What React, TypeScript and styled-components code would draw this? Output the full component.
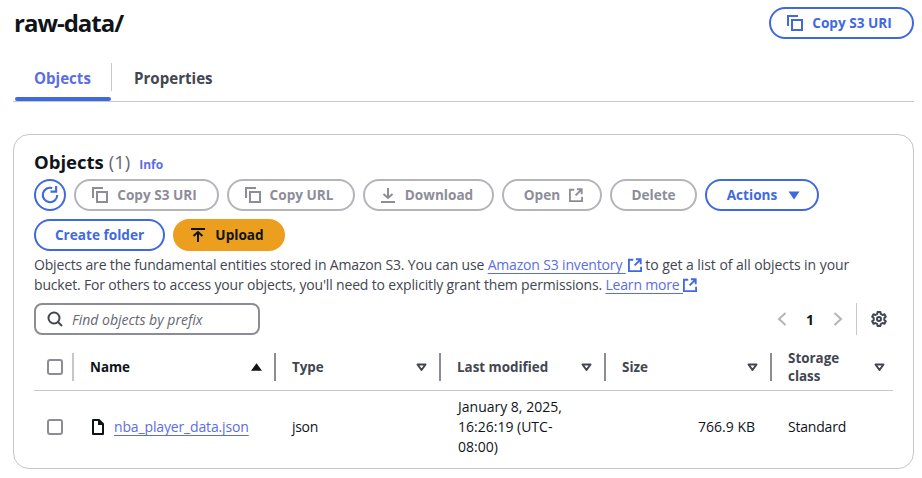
import styled, { createGlobalStyle } from "styled-components";

const BLUE = "#4069e0";
const LINK = "#5b6ee1";
const DIS = "#8d8d99";

const Global = createGlobalStyle`
  html, body { margin: 0; padding: 0; background: #fff; }
  body { font-family: "Open Sans", "Noto Sans", sans-serif; color: #0f141a; overflow: hidden; }
`;

const CopyIcon = () => (
  <svg width="16" height="16" viewBox="0 0 16 16" fill="none" stroke="currentColor" strokeWidth="2">
    <path d="M1 11V1h10" />
    <rect x="5" y="5" width="10" height="10" />
  </svg>
);

const ExternalIcon = ({ size = 14 }: { size?: number }) => (
  <svg width={size} height={size} viewBox="0 0 16 16" fill="none" stroke="currentColor" strokeWidth="2.2">
    <path d="M6 2H1v13h14v-5" />
    <path d="M9 1.500h5.500V7M14.500 1.500 7.500 8.500" />
  </svg>
);

const SortIcon = () => (
  <svg width="11" height="9" viewBox="0 0 11 9" fill="none" stroke="currentColor" strokeWidth="2">
    <path d="M1.500 1.500h8L5.500 7z" strokeLinejoin="round" />
  </svg>
);

const columns = [
  { label: "Type", width: 165 },
  { label: "Last modified", width: 165 },
  { label: "Size", width: 166 },
];

function App() {
  return (
    <Page>
      <Global />
      <Header>
        <Title>raw-data/</Title>
        <Button $tone="primary" $width={145} $icon="left">
          <CopyIcon />
          Copy S3 URI
        </Button>
      </Header>
      <Tabs>
        <Tab $active>Objects</Tab>
        <TabDivider />
        <Tab>Properties</Tab>
      </Tabs>
      <Card>
        <CardTitle>
          <h2>Objects</h2>
          <Count>(1)</Count>
          <Info>Info</Info>
        </CardTitle>
        <Actions>
          <RoundButton aria-label="Refresh">
            <svg width="20" height="20" viewBox="0 0 18 18" fill="none" stroke="currentColor" strokeWidth="1.900">
              <path d="M15.500 9A6.500 6.500 0 1 1 11 2.800" />
              <path d="M14.500 1v5h-5" />
            </svg>
          </RoundButton>
          <Button $tone="disabled" $width={145} $icon="left">
            <CopyIcon />
            Copy S3 URI
          </Button>
          <Button $tone="disabled" $width={128} $icon="left">
            <CopyIcon />
            Copy URL
          </Button>
          <Button $tone="disabled" $width={131} $icon="left">
            <svg width="16" height="16" viewBox="0 0 16 16" fill="none" stroke="currentColor" strokeWidth="2">
              <path d="M8 1v10M3.500 7 8 11l4.500-4M1 15h14" />
            </svg>
            Download
          </Button>
          <Button $tone="disabled" $width={100} $icon="right">
            Open
            <ExternalIcon />
          </Button>
          <Button $tone="disabled" $width={87}>Delete</Button>
          <Button $tone="primary" $width={114} $gap={11} $icon="right">
            Actions
            <svg width="12" height="9" viewBox="0 0 12 9" fill="currentColor">
              <path d="M0.500 0.500h11L6 8.500z" />
            </svg>
          </Button>
          <Button $tone="primary" $width={131}>Create folder</Button>
          <Button $tone="upload" $width={112} $icon="left">
            <svg width="16" height="16" viewBox="0 0 16 16" fill="none" stroke="currentColor" strokeWidth="2">
              <path d="M1 2h14M8 15V5M3.500 9 8 5l4.500 4" />
            </svg>
            Upload
          </Button>
        </Actions>
        <Description>
          <DescLine>
            Objects are the fundamental entities stored in Amazon S3. You can use{" "}
            <DocLink>Amazon S3 inventory </DocLink>
            <ExtMark $offset={2}><ExternalIcon /></ExtMark>
            <DescTail> to get a list of all objects in your</DescTail>
          </DescLine>
          <DescLine>
            bucket. For others to access your objects, you'll need to explicitly grant them permissions.{" "}
            <DocLink>Learn more </DocLink>
            <ExtMark><ExternalIcon /></ExtMark>
          </DescLine>
        </Description>
        <Filters>
          <Search>
            <svg width="16" height="16" viewBox="0 0 16 16" fill="none" stroke="#424650" strokeWidth="2">
              <circle cx="7" cy="7" r="5.500" />
              <path d="M11 11l4 4" />
            </svg>
            <span>Find objects by prefix</span>
          </Search>
          <Pager>
            <svg width="10" height="14" viewBox="0 0 10 14" fill="none" stroke="#b4b4bb" strokeWidth="2">
              <path d="M8.500 1 2 7l6.500 6" />
            </svg>
            <PageNumber>1</PageNumber>
            <svg width="10" height="14" viewBox="0 0 10 14" fill="none" stroke="#b4b4bb" strokeWidth="2">
              <path d="M1.500 1 8 7l-6.500 6" />
            </svg>
            <PagerDivider />
            <svg width="16" height="16" viewBox="0 0 16 16" fill="none" stroke="#424650" strokeWidth="2">
              <path d="M6.600 1h2.800l.4 2 1.700 1 2-.7 1.300 2.400-1.500 1.400v1.800l1.500 1.400-1.300 2.400-2-.7-1.700 1-.4 2H6.600l-.4-2-1.700-1-2 .7L1.200 10.300l1.500-1.400V7.100L1.200 5.700l1.300-2.400 2 .7 1.700-1z" strokeLinejoin="round" />
              <circle cx="8" cy="8" r="2" />
            </svg>
          </Pager>
        </Filters>
        <Table>
          <HeadRow>
            <CheckCell $head>
              <Check />
            </CheckCell>
            <HeadCell $width={202} $first>
              <strong>Name</strong>
              <svg width="11" height="8" viewBox="0 0 12 8" fill="#0f141a">
                <path d="M6 0l6 8H0z" />
              </svg>
            </HeadCell>
            {columns.map((c) => (
              <HeadCell key={c.label} $width={c.width}>
                {c.label}
                <SortIcon />
              </HeadCell>
            ))}
            <HeadCell $width={122} $last>
              <span>
                Storage
                <br />
                class
              </span>
              <SortIcon />
            </HeadCell>
          </HeadRow>
          <BodyRow>
            <CheckCell>
              <Check />
            </CheckCell>
            <NameCell>
              <svg width="14" height="16" viewBox="0 0 14 16" fill="none" stroke="#0f141a" strokeWidth="2">
                <path d="M2 1h6l4 4v10H2z" strokeLinejoin="round" />
                <path d="M8 1v4h4" fill="#0f141a" />
              </svg>
              <FileLink>nba_player_data.json</FileLink>
            </NameCell>
            <TypeCell>json</TypeCell>
            <DateCell>January 8, 2025, 16:26:19 (UTC-08:00)</DateCell>
            <SizeCell>766.9 KB</SizeCell>
            <ClassCell>Standard</ClassCell>
          </BodyRow>
        </Table>
      </Card>
    </Page>
  );
}

const Page = styled.div`
  width: 922px;
  height: 478px;
  padding: 7px 8px 0 13px;
  box-sizing: border-box;
  overflow: hidden;
`;

const Header = styled.div`
  display: flex;
  justify-content: space-between;
  align-items: flex-start;
  height: 32px;
`;

const Title = styled.h1`
  margin: 0 0 0 1px;
  font-size: 24px;
  letter-spacing: -1px;
  line-height: 32px;
  font-weight: 700;
`;

const Button = styled.button<{
  $tone: "primary" | "disabled" | "upload";
  $width: number;
  $gap?: number;
  $icon?: "left" | "right";
}>`
  width: ${(p) => p.$width}px;
  height: 32px;
  box-sizing: border-box;
  display: inline-flex;
  align-items: center;
  justify-content: center;
  gap: ${(p) => p.$gap ?? 9}px;
  padding: ${(p) => (p.$icon === "left" ? "0 4px 0 0" : p.$icon === "right" ? "0 0 0 3px" : "0")};
  border-radius: 20px;
  border: 2px solid ${(p) => (p.$tone === "primary" ? BLUE : p.$tone === "upload" ? "#ec9f1f" : "#b4b4bb")};
  background: ${(p) => (p.$tone === "upload" ? "#ec9f1f" : "#fff")};
  color: ${(p) => (p.$tone === "primary" ? BLUE : p.$tone === "upload" ? "#0f141a" : DIS)};
  font-family: inherit;
  font-size: 13.6px;
  font-weight: 700;
  line-height: 20px;
`;

const RoundButton = styled.button`
  width: 32px;
  height: 32px;
  box-sizing: border-box;
  padding: 0;
  display: inline-flex;
  align-items: center;
  justify-content: center;
  border-radius: 50%;
  border: 2px solid ${BLUE};
  background: #fff;
  color: ${BLUE};
`;

const Tabs = styled.div`
  display: flex;
  align-items: center;
  margin-top: 23px;
  height: 39px;
  padding-left: 2px;
  border-bottom: 1px solid #c6c6cd;
`;

const Tab = styled.div<{ $active?: boolean }>`
  position: relative;
  height: 39px;
  line-height: 33px;
  box-sizing: border-box;
  width: ${(p) => (p.$active ? "96px" : "auto")};
  padding-left: ${(p) => (p.$active ? "19px" : "22px")};
  font-size: 15.1px;
  font-weight: 700;
  color: ${(p) => (p.$active ? LINK : "#424650")};

  &::after {
    content: "";
    display: ${(p) => (p.$active ? "block" : "none")};
    position: absolute;
    left: 0;
    right: 0;
    bottom: 0;
    height: 4px;
    border-radius: 2px;
    background: ${BLUE};
  }
`;

const TabDivider = styled.div`
  width: 1px;
  height: 28px;
  margin-bottom: 9px;
  background: #c6c6cd;
`;

const Card = styled.section`
  margin-top: 32px;
  height: 335px;
  box-sizing: border-box;
  border: 1px solid #c6c6cd;
  border-radius: 16px;
  padding: 13px 20px 0;
`;

const CardTitle = styled.div`
  display: flex;
  align-items: baseline;
  height: 31px;

  h2 {
    margin: 0;
    font-size: 18.5px;
    line-height: 28px;
    font-weight: 700;
  }
`;

const Count = styled.span`
  margin-left: 5px;
  font-size: 18.5px;
  color: #656871;
`;

const Info = styled.span`
  margin-left: 9px;
  font-size: 12px;
  font-weight: 700;
  color: ${LINK};
`;

const Actions = styled.div`
  display: flex;
  flex-wrap: wrap;
  gap: 8px;
`;

const Description = styled.div`
  margin: 4px 0 0;
  font-size: 14px;
  line-height: 20px;
  letter-spacing: -0.17px;
  color: #424650;
`;

const DescLine = styled.div`
  white-space: pre-wrap;
`;

const DescTail = styled.span`
  letter-spacing: -0.06px;
`;

const DocLink = styled.a`
  color: ${LINK};
  text-decoration: underline;
  text-underline-offset: 3px;
`;

const ExtMark = styled.span<{ $offset?: number }>`
  color: ${BLUE};
  margin-left: ${(p) => p.$offset ?? 0}px;
  svg {
    vertical-align: -2px;
  }
`;

const Filters = styled.div`
  display: flex;
  justify-content: space-between;
  align-items: center;
  margin-top: 8px;
  height: 32px;
`;

const Search = styled.div`
  width: 226px;
  height: 32px;
  box-sizing: border-box;
  display: flex;
  align-items: center;
  gap: 9px;
  padding-left: 11px;
  border: 2px solid #8c8c94;
  border-radius: 8px;
  font-size: 14px;
  font-style: italic;
  color: #656871;
`;

const Pager = styled.div`
  display: flex;
  align-items: center;
  padding-right: 6px;
`;

const PageNumber = styled.span`
  width: 46px;
  text-align: center;
  font-size: 14px;
  font-weight: 700;
`;

const PagerDivider = styled.div`
  width: 1px;
  height: 32px;
  margin: 0 14px 0 13px;
  background: #c6c6cd;
`;

const Table = styled.div`
  margin-top: 18px;
  width: 859px;
`;

const HeadRow = styled.div`
  display: flex;
  align-items: flex-start;
  height: 37px;
  border-bottom: 1px solid #c6c6cd;
`;

const BodyRow = styled.div`
  display: flex;
  align-items: center;
  height: 72px;
  font-size: 14px;
  line-height: 20px;
  color: #0f141a;
`;

const CheckCell = styled.div<{ $head?: boolean }>`
  width: 38px;
  height: ${(p) => (p.$head ? "28px" : "auto")};
  align-items: center;
  padding-left: 13px;
  box-sizing: border-box;
  display: flex;
`;

const Check = styled.div`
  width: 16px;
  height: 16px;
  box-sizing: border-box;
  border: 2px solid #8c8c94;
  border-radius: 3px;
`;

const HeadCell = styled.div<{ $width: number; $first?: boolean; $last?: boolean }>`
  width: ${(p) => p.$width}px;
  height: 28px;
  box-sizing: border-box;
  display: flex;
  align-items: center;
  justify-content: space-between;
  padding: 0 ${(p) => (p.$last ? "7px" : "12px")} 0 16px;
  border-left: 2px solid ${(p) => (p.$first ? "#c6c6cd" : "#8c8c94")};
  font-size: 13.4px;
  line-height: 18px;
  font-weight: 700;
  color: ${(p) => (p.$first ? "#0f141a" : "#424650")};

  strong {
    font-weight: 700;
  }
  svg {
    flex: none;
  }
`;

const NameCell = styled.div`
  width: 202px;
  box-sizing: border-box;
  padding-left: 19px;
  display: flex;
  align-items: center;
  gap: 9px;
  letter-spacing: -0.15px;
`;

const FileLink = styled.a`
  color: ${LINK};
  text-decoration: underline;
  text-underline-offset: 3px;
`;

const TypeCell = styled.div`
  width: 165px;
  padding-left: 18px;
  box-sizing: border-box;
  letter-spacing: -0.3px;
`;

const DateCell = styled.div`
  width: 165px;
  padding: 0 16px 0 19px;
  box-sizing: border-box;
`;

const SizeCell = styled.div`
  width: 166px;
  padding-right: 15px;
  box-sizing: border-box;
  text-align: right;
`;

const ClassCell = styled.div`
  width: 122px;
  padding-left: 18px;
  box-sizing: border-box;
  letter-spacing: -0.2px;
`;

export default App;
